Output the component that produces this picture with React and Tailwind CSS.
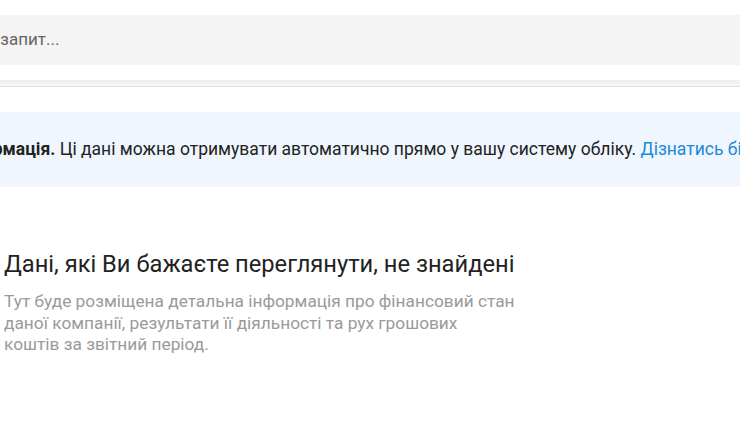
import React from 'react';

const font = { fontFamily: 'Roboto, "Noto Sans", sans-serif' };

export default function App() {
  return (
    <div className="w-[740px] h-[422px] overflow-hidden bg-white" style={font}>
      {/* search */}
      <div className="pt-[15px]">
        <div className="h-[50px] bg-[#f4f4f4] flex items-center overflow-hidden">
          <span className="ml-[-65px] whitespace-nowrap text-[17px] text-[#666]">Введіть запит...</span>
        </div>
      </div>

      {/* header shadow */}
      <div className="mt-[15px] h-[7px] bg-gradient-to-b from-[#ececec] to-[#f8f8f8] border-b border-[#dedede]" />

      {/* info banner */}
      <div className="mt-[25px] h-[75px] bg-[#eff6fe] flex items-center overflow-hidden">
        <p className="ml-[-139px] whitespace-nowrap text-[17.5px] text-[#222]">
          <b className="font-bold">Додаткова інформація.</b> Ці дані можна отримувати автоматично прямо у вашу систему обліку.{' '}
          <a className="text-[#1a8ad8]">Дізнатись більше</a>
        </p>
      </div>

      {/* empty state */}
      <div className="pl-[4px] pt-[62px]">
        <h2 className="text-[23.7px] leading-[30px] text-[#222]">Дані, які Ви бажаєте переглянути, не знайдені</h2>
        <p className="mt-[12px] w-[520px] text-[17.3px] leading-[21.5px] text-[#9a9a9a]">
          Тут буде розміщена детальна інформація про фінансовий стан даної компанії, результати її діяльності та рух грошових
          <br />
          коштів за звітний період.
        </p>
      </div>
    </div>
  );
}
